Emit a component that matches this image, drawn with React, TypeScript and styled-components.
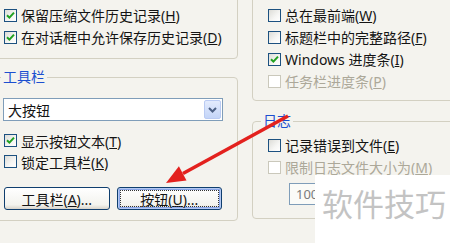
import styled, { createGlobalStyle } from "styled-components";

const GlobalStyle = createGlobalStyle`
  html, body { margin: 0; padding: 0; }
  body {
    background: #f4f3ee;
    font-family: "Noto Sans", "Noto Sans CJK SC", sans-serif;
    font-size: 14px;
    color: #141414;
  }
`;

const Page = styled.div`
  position: relative;
  width: 450px;
  height: 243px;
  overflow: hidden;
`;

const Columns = styled.div`
  display: grid;
  grid-template-columns: 246px 240px;
  column-gap: 14px;
  margin: -20px 0 0 -8px;
`;

const Column = styled.div`
  display: flex;
  flex-direction: column;
`;

const Group = styled.fieldset<{ $pt: number; $pb: number; $mt?: number }>`
  margin: ${(p) => p.$mt || 0}px 0 0 0;
  min-width: 0;
  border: 1px solid #d3d0c2;
  border-radius: 4px;
  padding: ${(p) => p.$pt}px 15px ${(p) => p.$pb}px 10px;
`;

const Legend = styled.legend`
  color: #1c4fd0;
  padding: 0 2px;
  margin-left: -2px;
  line-height: 16px;
`;

const Row = styled.div<{ $h: number; $indent: number; $disabled?: boolean }>`
  display: flex;
  align-items: center;
  gap: 4px;
  height: ${(p) => p.$h}px;
  padding-left: ${(p) => p.$indent}px;
  white-space: nowrap;
  color: ${(p) => (p.$disabled ? "#aca899" : "inherit")};
`;

const Box = styled.span<{ $disabled?: boolean }>`
  display: inline-flex;
  align-items: center;
  justify-content: center;
  flex: none;
  width: 13px;
  height: 13px;
  box-sizing: border-box;
  border: 1px solid ${(p) => (p.$disabled ? "#cac8bb" : "#1c5180")};
  background: ${(p) =>
    p.$disabled ? "#fff" : "linear-gradient(135deg, #dcdcd7 0%, #f6f6f4 60%, #fff 100%)"};
`;

const Combo = styled.div`
  display: flex;
  align-items: center;
  justify-content: space-between;
  width: 220px;
  height: 23px;
  box-sizing: border-box;
  border: 1px solid #7f9db9;
  background: #fff;
  padding: 1px 1px 1px 4px;
  margin-top: 1px;
`;

const DropButton = styled.span`
  display: flex;
  align-items: center;
  justify-content: center;
  width: 17px;
  height: 19px;
  box-sizing: border-box;
  border: 1px solid #bacbf3;
  border-radius: 2px;
  background: linear-gradient(#e3ebfd, #c4d5f8);
`;

const ButtonRow = styled.div`
  display: flex;
  gap: 7px;
  margin: 15px 0 0 1px;
`;

const Button = styled.button<{ $default?: boolean }>`
  width: 107px;
  height: 23px;
  padding: 0;
  border: 1px solid #0f3e6e;
  border-radius: 3px;
  font: inherit;
  color: #141414;
  background: linear-gradient(#ffffff, #f3f3ee 80%, #d8d4ca);
  box-shadow: ${(p) => (p.$default ? "inset 0 0 0 1px #b3c8f2, inset 0 0 0 2px #8aa6e8" : "none")};
  outline: ${(p) => (p.$default ? "1px dotted #333" : "none")};
  outline-offset: -4px;
`;

const SizeInput = styled.div`
  display: flex;
  align-items: center;
  width: 70px;
  height: 22px;
  box-sizing: border-box;
  margin: 5px 0 0 26px;
  border: 1px solid #7f9db9;
  background: #fbfbf8;
  color: #7a7a7a;
  font-size: 13px;
  padding-left: 6px;
`;

const ArrowLayer = styled.svg`
  position: absolute;
  left: 0;
  top: 0;
  pointer-events: none;
`;

const Watermark = styled.div`
  position: absolute;
  left: 315px;
  top: 175px;
  width: 135px;
  height: 68px;
  background: #fff;
  color: #c3c3c3;
  font-family: "Noto Sans CJK SC", sans-serif;
  font-size: 31px;
  line-height: 56px;
  padding-left: 7px;
  box-sizing: border-box;
  white-space: nowrap;
`;

function Check({ checked, disabled }: { checked?: boolean; disabled?: boolean }) {
  return (
    <Box $disabled={disabled}>
      {checked ? (
        <svg width="9" height="9" viewBox="0 0 9 9">
          <path d="M1 4.2 L3.4 6.6 L8 1.6" fill="none" stroke="#21a121" strokeWidth="2" />
        </svg>
      ) : null}
    </Box>
  );
}

function Option({
  label,
  keyChar,
  checked,
  disabled,
  h = 22,
  indent = 1,
}: {
  label: string;
  keyChar?: string;
  checked?: boolean;
  disabled?: boolean;
  h?: number;
  indent?: number;
}) {
  return (
    <Row $h={h} $indent={indent} $disabled={disabled}>
      <Check checked={checked} disabled={disabled} />
      <span>
        {label}
        {keyChar ? (
          <>
            (<u>{keyChar}</u>)
          </>
        ) : null}
      </span>
    </Row>
  );
}

export default function App() {
  return (
    <Page>
      <GlobalStyle />
      <Columns>
        <Column>
          <Group $pt={23} $pb={10}>
            <Option label="保留压缩文件历史记录" keyChar="H" checked />
            <Option label="在对话框中允许保存历史记录" keyChar="D" checked />
          </Group>
          <Group $pt={12} $pb={10} $mt={10}>
            <Legend>工具栏</Legend>
            <Combo>
              <span>大按钮</span>
              <DropButton>
                <svg width="9" height="6" viewBox="0 0 9 6">
                  <path d="M1 1 L4.5 4.5 L8 1" fill="none" stroke="#4d6185" strokeWidth="2" />
                </svg>
              </DropButton>
            </Combo>
            <div style={{ height: 9 }} />
            <Option label="显示按钮文本" keyChar="T" checked h={21} />
            <Option label="锁定工具栏" keyChar="K" h={21} />
            <ButtonRow>
              <Button>
                工具栏(<u>A</u>)...
              </Button>
              <Button $default>
                按钮(<u>U</u>)...
              </Button>
            </ButtonRow>
          </Group>
        </Column>
        <Column>
          <Group $pt={1} $pb={8}>
            <Option label="" indent={5} />
            <Option label="总在最前端" keyChar="W" indent={5} />
            <Option label="标题栏中的完整路径" keyChar="F" indent={5} />
            <Option label="Windows 进度条" keyChar="I" checked indent={5} />
            <Option label="任务栏进度条" keyChar="P" disabled indent={5} />
          </Group>
          <Group $pt={5} $pb={13} $mt={12}>
            <Legend>日志</Legend>
            <Option label="记录错误到文件" keyChar="E" indent={5} />
            <Option label="限制日志文件大小为" keyChar="M" disabled indent={5} />
            <SizeInput>100</SizeInput>
          </Group>
        </Column>
      </Columns>
      <ArrowLayer width="450" height="243" viewBox="0 0 450 243">
        <line x1="288" y1="116" x2="183" y2="173.5" stroke="#e3211e" strokeWidth="3.5" />
        <polygon points="166,183 186.5,180.4 178.9,166.3" fill="#e3211e" />
      </ArrowLayer>
      <Watermark>软件技巧</Watermark>
    </Page>
  );
}
